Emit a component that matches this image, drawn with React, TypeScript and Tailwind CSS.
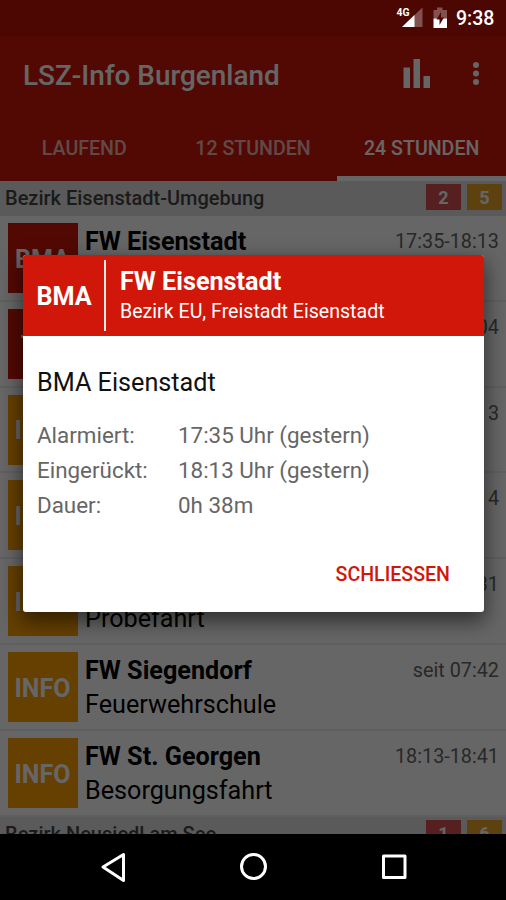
type Incident = {
  tag: string;
  title?: string;
  text?: string;
  time: string;
};

const incidents: Incident[] = [
  { tag: "BMA", title: "FW Eisenstadt", time: "17:35-18:13" },
  { tag: "TEE", time: "04" },
  { tag: "INFO", time: "3" },
  { tag: "INFO", time: "4" },
  { tag: "INFO", text: "Probefahrt", time: "31" },
  { tag: "INFO", title: "FW Siegendorf", text: "Feuerwehrschule", time: "seit 07:42" },
  { tag: "INFO", title: "FW St. Georgen", text: "Besorgungsfahrt", time: "18:13-18:41" },
];

const details = [
  { label: "Alarmiert:", value: "17:35 Uhr (gestern)" },
  { label: "Eingerückt:", value: "18:13 Uhr (gestern)" },
  { label: "Dauer:", value: "0h 38m" },
];

const tabs = ["LAUFEND", "12 STUNDEN", "24 STUNDEN"];

function StatusIcons() {
  return (
    <div className="absolute inset-x-0 top-0 flex h-9 items-center justify-end pr-[11px] text-white">
      <svg width="60" height="36" viewBox="0 0 60 36">
        <path d="M26.5 7.5V27H6z" fill="#fff" fillOpacity="0.3" />
        <path d="M18.5 15V27H6z" fill="#fff" />
        <text x="0.5" y="16" fontSize="11" fontWeight="700" fontFamily="Roboto, sans-serif" fill="#fff" textLength="13" lengthAdjust="spacingAndGlyphs">
          4G
        </text>
        <path d="M37.5 10H41V7.5h5.500V10H51v8.5H37.5z" fill="#fff" fillOpacity="0.3" />
        <path d="M37.5 18.5H51V28H37.5z" fill="#fff" />
        <path d="M45 12l-4.5 7.5h3V25l4.5-7.5h-3z" fill="#4e0703" />
      </svg>
      <span className="w-[39px] pt-px text-[19.5px] font-medium leading-none">9:38</span>
    </div>
  );
}

function SectionHeader({ title, red, yellow }: { title: string; red: number; yellow: number }) {
  return (
    <div className="flex h-[35.5px] shrink-0 items-center bg-[#e1e1e1] pl-[5px] pr-1">
      <span className="-mt-px grow text-[20px] font-medium text-[#444]">{title}</span>
      <div className="-mt-0.5 flex gap-[6px] text-center text-[18px] font-bold leading-[27px] text-white">
        <span className="h-[26px] w-[35px] bg-[#d75050]">{red}</span>
        <span className="h-[26px] w-[35px] bg-[#e8a52a]">{yellow}</span>
      </div>
    </div>
  );
}

function IncidentRow({ tag, title, text, time }: Incident) {
  return (
    <div className="flex h-[85.8px] shrink-0 border-b-2 border-[#eee] pl-[7.5px] pr-[7px] pt-[7px]">
      <div
        className={`flex size-[70px] shrink-0 items-center justify-center pt-[3px] text-[25px] font-bold text-white ${
          tag === "INFO" ? "bg-[#ffa000]" : "bg-[#d01709]"
        }`}
      >
        {tag}
      </div>
      <div className="flex grow flex-col pl-[7.5px] pt-[2px] text-[25.2px] leading-[34px] text-black">
        <b className="h-[34px]">{title}</b>
        <span>{text}</span>
      </div>
      <span className="pt-[3px] text-[19.8px] leading-8 text-[#666]">{time}</span>
    </div>
  );
}

function Dialog() {
  return (
    <div className="absolute left-[23px] top-[255px] flex h-[357px] w-[461px] flex-col overflow-hidden rounded-[3px] bg-white shadow-[0_8px_20px_2px_rgba(0,0,0,0.5)]">
      <div className="flex h-[81px] shrink-0 items-center bg-[#d01709] text-white">
        <span className="w-[81px] pl-[13.5px] pt-[3px] text-[25.2px] font-bold">BMA</span>
        <span className="h-[71px] w-[2px] bg-white/90" />
        <div className="flex flex-col pl-[14px] pt-0.5">
          <span className="text-[25.2px] font-bold leading-[30px]">FW Eisenstadt</span>
          <span className="text-[19.6px] leading-[29px]">Bezirk EU, Freistadt Eisenstadt</span>
        </div>
      </div>
      <div className="flex grow flex-col pl-[14px] pt-[31px]">
        <span className="text-[25.2px] leading-8 text-[#111]">BMA Eisenstadt</span>
        <dl className="mt-[19px] grid grid-cols-[141px_1fr] text-[22.4px] leading-[34.8px] text-[#666]">
          {details.map((d) => (
            <div key={d.label} className="contents">
              <dt>{d.label}</dt>
              <dd>{d.value}</dd>
            </div>
          ))}
        </dl>
      </div>
      <button className="mr-[34px] mb-[22px] self-end text-[19.6px] font-medium leading-[30px] text-[#d01709]">
        SCHLIESSEN
      </button>
    </div>
  );
}

export default function App() {
  return (
    <div className="relative flex h-[900px] w-[506px] flex-col overflow-hidden bg-white font-['Roboto',sans-serif]">
      <header className="flex h-[180.5px] shrink-0 flex-col bg-[#d01709] text-white">
        <div className="h-9 shrink-0 bg-[#c01208]" />
        <div className="flex h-[79px] shrink-0 items-center pl-[23px]">
          <h1 className="grow text-[27.9px] font-medium">LSZ-Info Burgenland</h1>
          <svg width="106" height="79" viewBox="0 0 106 79" fill="currentColor">
            <path d="M3.5 31.5H10V52H3.5zM13.5 23H20v29h-6.5zM23.5 40H30v12h-6.5z" />
            <circle cx="76" cy="29" r="3" />
            <circle cx="76" cy="37.5" r="3" />
            <circle cx="76" cy="46" r="3" />
          </svg>
        </div>
        <nav className="flex grow text-[19.6px] font-medium">
          {tabs.map((tab, i) => (
            <div
              key={tab}
              className={`flex flex-1 items-center justify-center border-b-[5.5px] pt-[6px] ${
                i === 2 ? "border-white" : "border-transparent text-white/70"
              }`}
            >
              {tab}
            </div>
          ))}
        </nav>
      </header>

      <main className="flex h-[653.5px] shrink-0 flex-col overflow-hidden">
        <SectionHeader title="Bezirk Eisenstadt-Umgebung" red={2} yellow={5} />
        {incidents.map((item, i) => (
          <IncidentRow key={i} {...item} />
        ))}
        <SectionHeader title="Bezirk Neusiedl am See" red={1} yellow={6} />
      </main>

      {/* Scrim */}
      <div className="absolute inset-0 bg-black/60" />
      <StatusIcons />
      <Dialog />

      <footer className="relative flex grow bg-black">
        <svg width="506" height="66" viewBox="0 0 506 66" fill="none" stroke="#fff" strokeWidth="3">
          <path d="M123.5 20.5v26L103 33z" strokeLinejoin="round" />
          <circle cx="253.5" cy="32.5" r="12" />
          <rect x="383.5" y="22" width="21.5" height="21.5" strokeLinejoin="round" />
        </svg>
      </footer>
    </div>
  );
}
